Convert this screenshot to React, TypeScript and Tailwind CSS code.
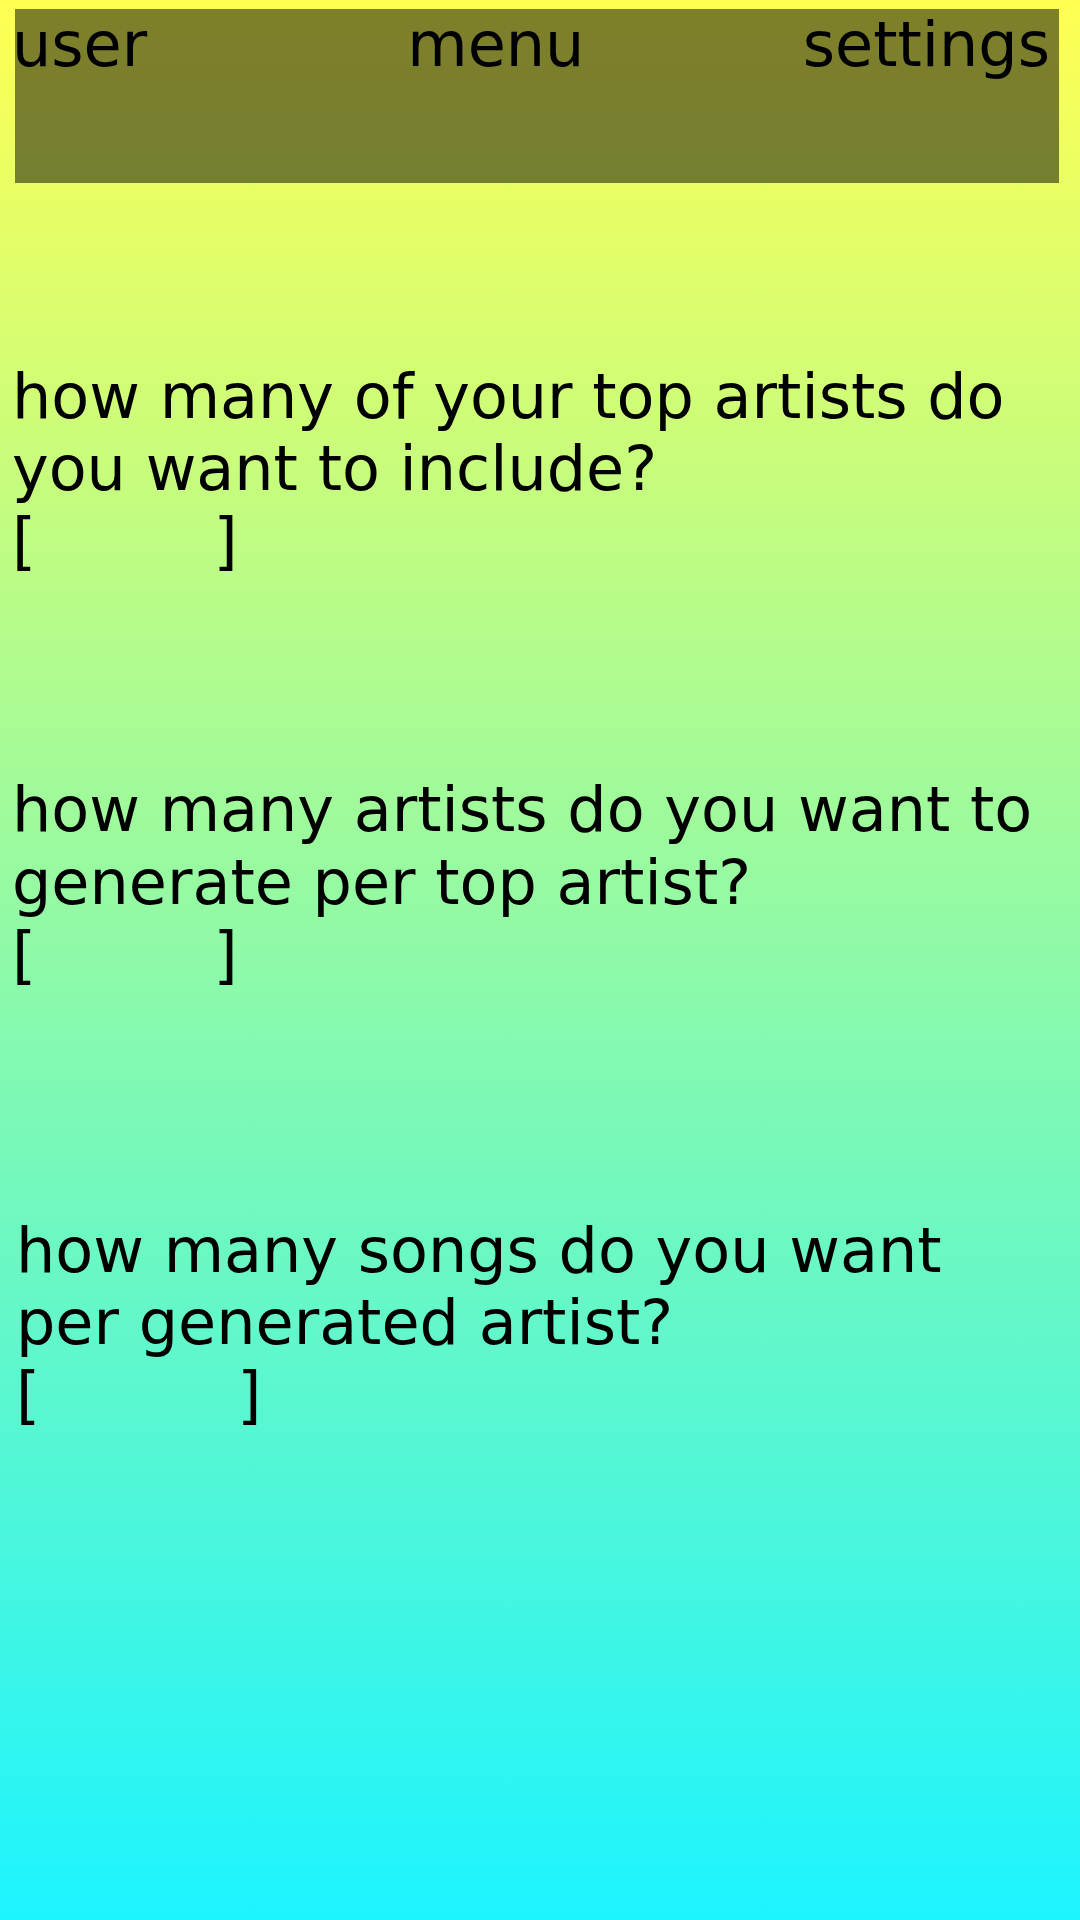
const questions = [
  { text: 'how many of your top artists do you want to include?', gap: 9, cls: 'mt-[178px] pl-[12px]' },
  { text: 'how many artists do you want to generate per top artist?', gap: 9, cls: 'mt-[197px] pl-[12px]' },
  { text: 'how many songs do you want per generated artist?', gap: 10, cls: 'mt-[224px] pl-[16px]' },
];

const App = () => {
  return (
    <div className="min-h-[1920px] w-full bg-[linear-gradient(to_bottom,#ffff52,#1cf4ff)] pt-[9px] font-['DejaVu_Sans',sans-serif] text-[62px] leading-[1.164] text-black">
      {/* top bar */}
      <header className="ml-[15px] mr-[21px] h-[174px] bg-black/50">
        <div className="-ml-[3px] flex pr-[9px]">
          <span>user</span>
          <span className="ml-[260px]">menu</span>
          <span className="ml-auto">settings</span>
        </div>
      </header>

      {questions.map((q) => (
        <div key={q.text} className={q.cls}>
          <p className="w-[1035px]">{q.text}</p>
          <p className="whitespace-pre">{'[' + ' '.repeat(q.gap) + ']'}</p>
        </div>
      ))}
    </div>
  );
};

export default App;
